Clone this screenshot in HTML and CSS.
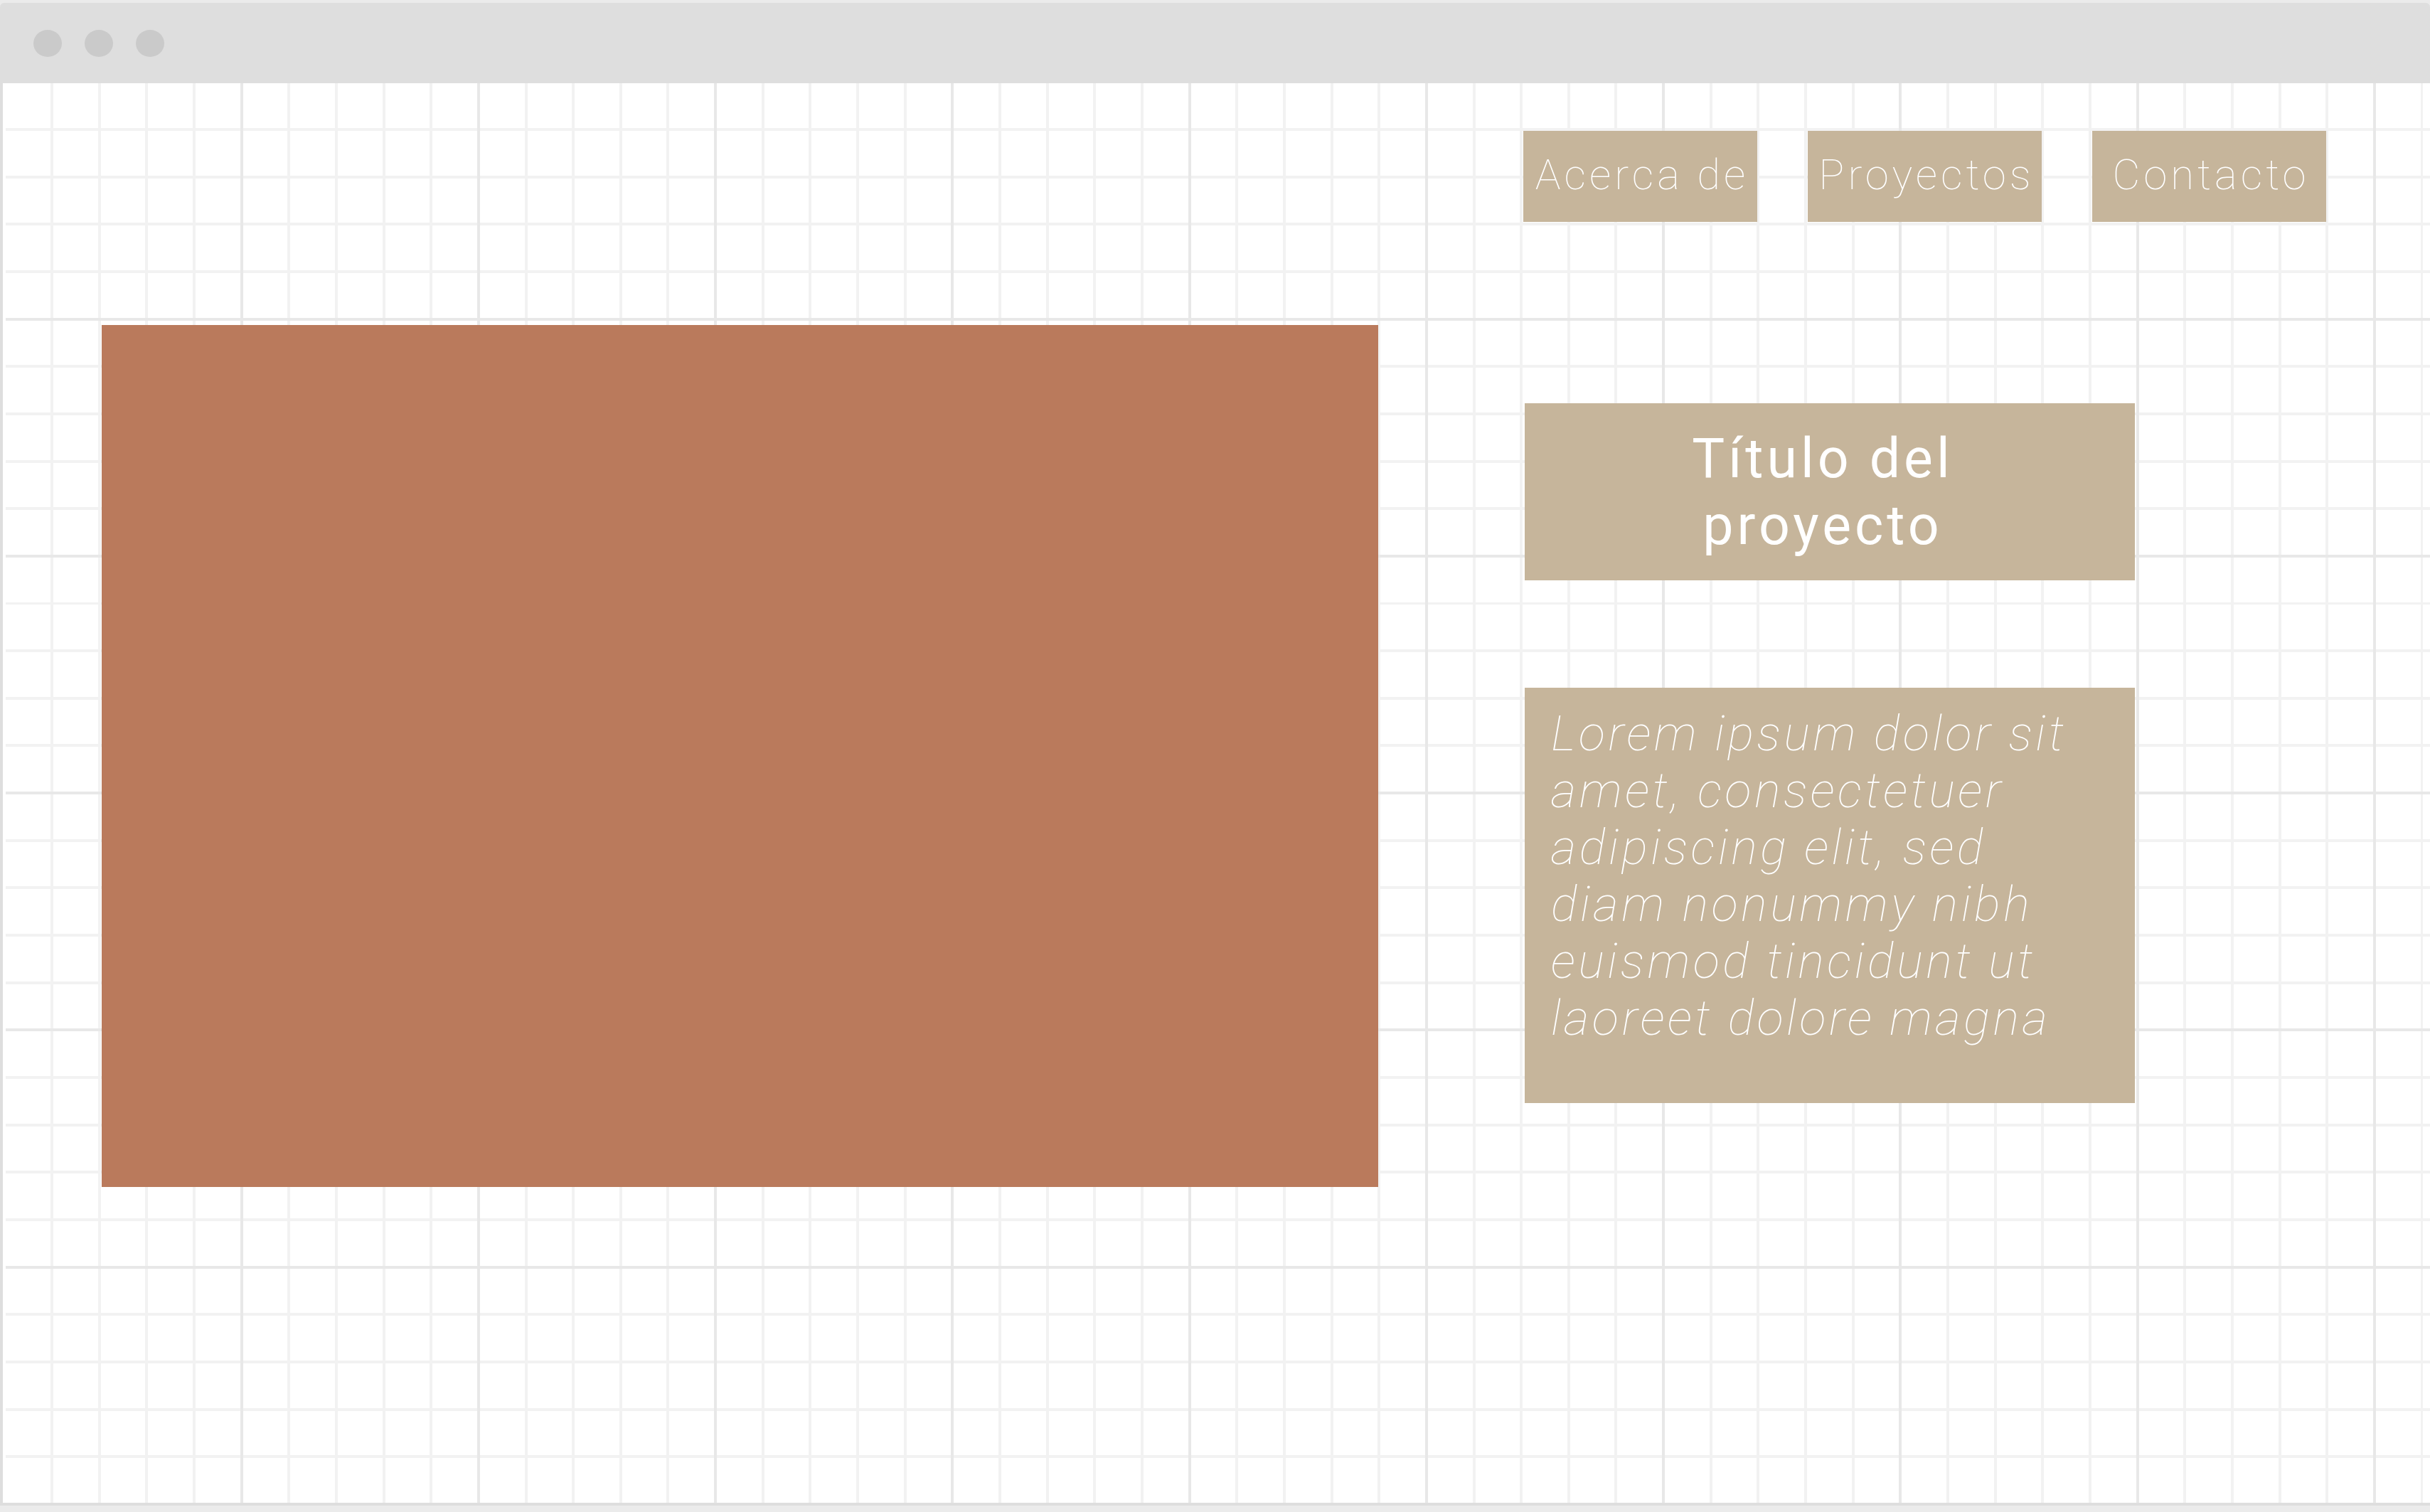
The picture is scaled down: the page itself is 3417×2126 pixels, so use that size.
FILE: index.html
```html
<!DOCTYPE html>
<html lang="es">
<head>
    <meta charset="UTF-8">
    <meta name="viewport" content="width=device-width, initial-scale=1.0">
    <title>Proyecto</title>
    <link rel="stylesheet" href="styles.css">
</head>
<body>

<div class="window">
    <div class="chrome">
        <span class="dot"></span>
        <span class="dot"></span>
        <span class="dot"></span>
    </div>

    <div class="canvas">
        <nav class="nav">
            <a class="nav-item" href="#">Acerca de</a>
            <a class="nav-item" href="#">Proyectos</a>
            <a class="nav-item" href="#">Contacto</a>
        </nav>

        <div class="project">
            <div class="project-image"></div>

            <div class="project-info">
                <h1 class="project-title">Título del<br>proyecto</h1>
                <p class="project-text">
                    Lorem ipsum dolor sit<br>
                    amet, consectetuer<br>
                    adipiscing elit, sed<br>
                    diam nonummy nibh<br>
                    euismod tincidunt ut<br>
                    laoreet dolore magna
                </p>
            </div>
        </div>
    </div>
</div>

</body>
</html>
```

FILE: styles.css
```css
body {
    margin: 0;
    padding: 0;
    background-color: #ebebeb;
    font-family: Roboto, "Liberation Sans", sans-serif;
}
.window {
    margin-top: 4px;
    background-color: #dedede;
    border-radius: 6px 6px 0 0;
    padding-bottom: 4px;
}
.chrome {
    height: 113px;
    display: flex;
    align-items: center;
    gap: 32px;
    padding-left: 47px;
}
.dot {
    width: 40px;
    height: 38px;
    border-radius: 50%;
    background-color: #cacaca;
}
.canvas {
    margin-left: 4px;
    height: 1996px;
    box-sizing: border-box;
    border-left: 4px solid #fff;
    padding: 67px 146px 0 135px;
    background-color: #fff;
    background-clip: padding-box;
    background-origin: padding-box;
    background-image:
        repeating-linear-gradient(90deg, #e8e8e8 0 0.35px, transparent 0.35px 329.6px, #e8e8e8 329.6px 333.25px),
        repeating-linear-gradient(180deg, #e8e8e8 0 0.35px, transparent 0.35px 329.6px, #e8e8e8 329.6px 333.25px),
        repeating-linear-gradient(90deg, #f2f2f2 0 0.35px, transparent 0.35px 63px, #f2f2f2 63px 66.65px),
        repeating-linear-gradient(180deg, #f2f2f2 0 0.35px, transparent 0.35px 63px, #f2f2f2 63px 66.65px);
}
.nav {
    display: flex;
    justify-content: flex-end;
    gap: 71px;
}
.nav-item {
    width: 329px;
    height: 128px;
    display: flex;
    align-items: center;
    justify-content: center;
    background-color: #c6b59b;
    color: #fff;
    text-decoration: none;
    font-size: 60px;
    font-weight: 100;
    letter-spacing: 5px;
    padding: 0 0 6px 5px;
    box-sizing: border-box;
}
.project {
    display: flex;
    margin-top: 145px;
}
.project-image {
    width: 1795px;
    height: 1212px;
    background-color: #ba7a5c;
}
.project-info {
    width: 858px;
    margin-left: 206px;
    padding-top: 110px;
}
.project-title {
    height: 249px;
    margin: 0;
    display: flex;
    align-items: center;
    justify-content: center;
    text-align: center;
    background-color: #c6b59b;
    color: #fff;
    font-size: 77px;
    font-weight: 400;
    letter-spacing: 5px;
    line-height: 94px;
    padding-right: 20px;
}
.project-text {
    height: 584px;
    margin: 151px 0 0 0;
    padding: 25px 0 0 37px;
    box-sizing: border-box;
    background-color: #c6b59b;
    color: #fff;
    font-size: 69px;
    font-weight: 100;
    font-style: italic;
    letter-spacing: 4.5px;
    line-height: 80px;
}
```
